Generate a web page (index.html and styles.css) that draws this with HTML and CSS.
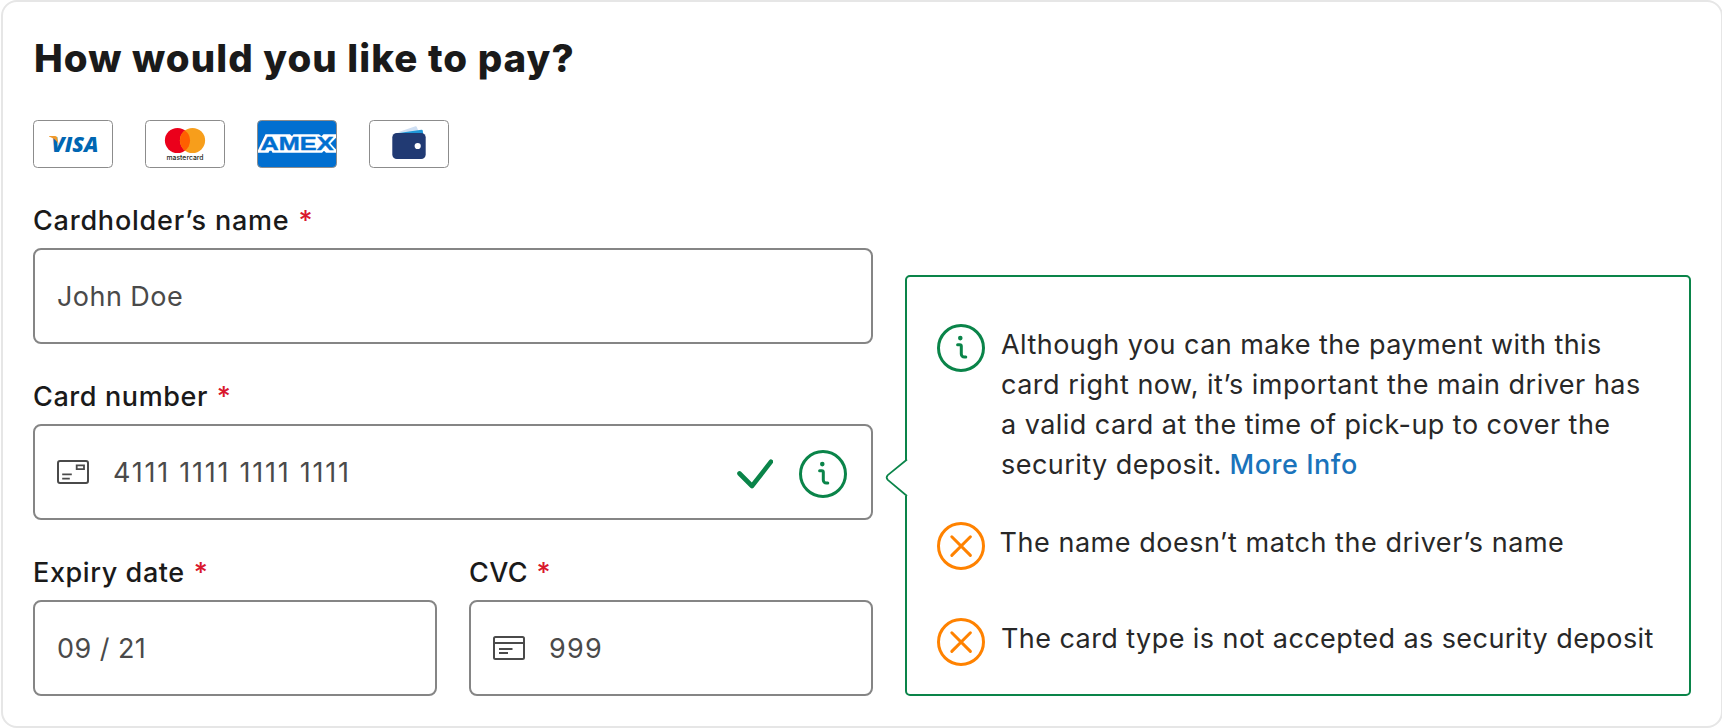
FILE: index.html
```html
<!DOCTYPE html>
<html lang="en">
<head>
<meta charset="utf-8">
<title>Payment</title>
<link rel="stylesheet" href="styles.css">
</head>
<body>
<main class="card">
  <h1 class="title">How would you like to pay?</h1>
  <div class="brands">
    <svg class="brand" viewBox="0 0 80 48" role="img" aria-label="Visa">
      <rect class="frame" x=".5" y=".5" width="79" height="47" rx="4"/>
      <text class="visa" x="18.500" y="31.500" textLength="47" lengthAdjust="spacingAndGlyphs">VISA</text>
      <path fill="#f09a2c" d="M16 16h6.200q1.600 0 2 1.600l1.400 7q-2.300-5.800-9.600-8.200z"/>
    </svg>
    <svg class="brand" viewBox="0 0 80 48" role="img" aria-label="Mastercard">
      <rect class="frame" x=".5" y=".5" width="79" height="47" rx="4"/>
      <circle cx="32.500" cy="20.500" r="12.600" fill="#eb001b"/>
      <circle cx="47.500" cy="20.500" r="12.600" fill="#f79e1b"/>
      <path fill="#ff5f00" d="M40 10.400a12.600 12.600 0 0 1 0 20.200a12.600 12.600 0 0 1 0-20.200z"/>
      <text class="mc" x="21.500" y="40" textLength="37" lengthAdjust="spacingAndGlyphs">mastercard</text>
    </svg>
    <svg class="brand" viewBox="0 0 80 48" role="img" aria-label="American Express">
      <rect x=".5" y=".5" width="79" height="47" rx="4" fill="#016fd0"/>
      <path fill="#fff" d="M1 32.800v-2.500l7.500-16.100H33l2 2 1.500-2H62l2.500 2 2-2H79v3.600L73.500 23.500l5.500 6v3.300H69l-2-2-2 2H15.500l-1-2h-2l-1 2z"/>
      <text class="amex" x="3.500" y="30" textLength="73" lengthAdjust="spacingAndGlyphs">AMEX</text>
      <rect class="frame clear" x=".5" y=".5" width="79" height="47" rx="4"/>
    </svg>
    <svg class="brand" viewBox="0 0 80 48" role="img" aria-label="Wallet">
      <rect class="frame" x=".5" y=".5" width="79" height="47" rx="4"/>
      <path fill="#cfdff3" d="M28 12.500L46.500 6.200q1-.3 1.300.7L50 12.500z"/>
      <path fill="#1f97d8" d="M28 13.200L52.500 9.700q1.100-.1 1.300 1l.5 4H28z"/>
      <rect x="23.300" y="13" width="33.400" height="26" rx="4.500" fill="#213a73"/>
      <circle cx="48.700" cy="26" r="3.100" fill="#fff"/>
    </svg>
  </div>

  <div class="layout">
    <form class="form">
      <div class="field">
        <label class="label l-name">Cardholder’s name <span class="req">*</span></label>
        <div class="input"><span class="v-text">John Doe</span></div>
      </div>
      <div class="field">
        <label class="label">Card number <span class="req">*</span></label>
        <div class="input">
          <svg class="ico" viewBox="0 0 32 24"><rect x="1" y="1" width="30" height="22" rx="2"/><path class="thin" d="M19.700 5.400h7.300v3.700h-7.300zM5.200 14.400h9.600M5.200 18.600h7.600"/></svg>
          <span class="v-number">4111 1111 1111 1111</span>
          <span class="status">
            <svg class="check" viewBox="0 0 36 30"><path d="M2.500 14.500l12.500 12.500L34 2.700"/></svg>
            <svg class="round info" viewBox="0 0 48 48"><circle cx="24" cy="24" r="22.500"/><circle class="dot" cx="23.300" cy="14.100" r="2.300"/><path d="M20.600 20.800h2.200a1.500 1.500 0 0 1 1.500 1.500v7.700a3 3 0 0 0 3 3h1.500"/></svg>
          </span>
        </div>
      </div>
      <div class="pair">
        <div class="field">
          <label class="label">Expiry date <span class="req">*</span></label>
          <div class="input"><span class="v-text">09 / 21</span></div>
        </div>
        <div class="field">
          <label class="label l-cvc">CVC <span class="req">*</span></label>
          <div class="input">
            <svg class="ico" viewBox="0 0 32 24"><rect x="1" y="1" width="30" height="22" rx="1.500"/><path d="M1 7h30M6 13h13.500M6 17h9"/></svg>
            <span class="v-cvc">999</span>
          </div>
        </div>
      </div>
    </form>

    <aside class="callout">
      <svg class="arrow" viewBox="0 0 23 40"><path class="mask" d="M20 2h3v36h-3z"/><path class="edge" d="M22 1.500L2.800 17.100q-2.300 2.300 0 4.800L22 38"/></svg>
      <div class="note note-info">
        <svg class="round info" viewBox="0 0 48 48"><circle cx="24" cy="24" r="22.500"/><circle class="dot" cx="23.300" cy="14.100" r="2.300"/><path d="M20.600 20.800h2.200a1.500 1.500 0 0 1 1.500 1.500v7.700a3 3 0 0 0 3 3h1.500"/></svg>
        <p class="msg"><span class="m1">Although you can make the payment with this</span><br><span class="m2">card right now, it’s important the main driver has</span><br><span class="m3">a valid card at the time of pick-up to cover the</span><br><span class="m4">security deposit.</span> <a class="more">More Info</a></p>
      </div>
      <div class="note note-name">
        <svg class="round error" viewBox="0 0 48 48"><circle cx="24" cy="24" r="22.500"/><path d="M14.800 14.800l18.600 18.600M33.400 14.800L14.800 33.400"/></svg>
        <p class="msg m5">The name doesn’t match the driver’s name</p>
      </div>
      <div class="note">
        <svg class="round error" viewBox="0 0 48 48"><circle cx="24" cy="24" r="22.500"/><path d="M14.800 14.800l18.600 18.600M33.400 14.800L14.800 33.400"/></svg>
        <p class="msg m6">The card type is not accepted as security deposit</p>
      </div>
    </aside>
  </div>
</main>
</body>
</html>
```

FILE: styles.css
```css
* { box-sizing: border-box; }
html { overflow: hidden; }
body {
  margin: 0;
  background: #fff;
  font-family: Inter, "Liberation Sans", sans-serif;
  font-size: 27px;
  color: #1a1a1a;
  overflow: hidden;
}
.card {
  width: 1722px;
  height: 728px;
  margin-left: 1px;
  padding: 30px;
  border: 2px solid #e6e6e6;
  border-radius: 16px;
}
.title {
  margin: 0;
  height: 56px;
  padding-left: 1px;
  font: 800 38.500px/52px Inter, sans-serif;
  letter-spacing: 1.050px;
  white-space: nowrap;
}
.brands { display: flex; gap: 32px; margin-top: 32px; }
.brand { width: 80px; height: 48px; display: block; }
.frame { fill: #fff; stroke: #8c8c8c; stroke-width: 1; }
.frame.clear { fill: none; }
.visa { font: italic 800 21px "Open Sans", sans-serif; fill: #0066b2; }
.mc { font: 500 7px Inter, sans-serif; fill: #231f20; }
.amex { font: bold 18.500px "Liberation Sans", sans-serif; fill: #016fd0; stroke: #016fd0; stroke-width: .4; }

.layout { display: flex; align-items: flex-end; gap: 32px; margin-top: 32px; }
.form { width: 840px; display: flex; flex-direction: column; gap: 32px; }
.pair { display: grid; grid-template-columns: 1fr 1fr; gap: 32px; }
.label {
  display: block;
  height: 48px;
  padding-top: 1px;
  line-height: 40px;
  font-weight: 500;
  letter-spacing: 0.6px;
  white-space: pre;
}
.l-name { letter-spacing: 0.780px; }
.l-cvc { letter-spacing: 0.4px; }
.req { color: #d9182d; margin-left: 1px; }
.input {
  display: flex;
  align-items: center;
  height: 96px;
  padding: 0 24px 0 22px;
  border: 2px solid #858585;
  border-radius: 8px;
  color: #4a4a4a;
  white-space: pre;
}
.v-text { letter-spacing: 0.450px; }
.v-number { letter-spacing: 1.750px; }
.v-cvc { letter-spacing: 1.200px; }
.ico { width: 32px; height: 24px; margin-right: 24px; fill: none; stroke: #4a4a4a; stroke-width: 2; }
.thin { stroke-width: 1.800; }
.status { margin-left: auto; padding-top: 4px; display: flex; align-items: center; gap: 26px; }
.check { width: 36px; height: 30px; fill: none; stroke: #0a8449; stroke-width: 4.600; stroke-linecap: round; stroke-linejoin: round; }
.round { width: 48px; height: 48px; flex: none; fill: none; stroke-width: 3; stroke-linecap: round; stroke-linejoin: round; }
.info { stroke: #0a8449; }
.info .dot { fill: #0a8449; stroke: none; }
.error { stroke: #ff8200; }

.callout {
  position: relative;
  width: 786px;
  height: 421px;
  padding: 47px 0 0 30px;
  border: 2px solid #0a8449;
  border-radius: 5px;
}
.arrow { position: absolute; left: -22px; top: 181px; width: 23px; height: 40px; overflow: visible; }
.mask { fill: #fff; }
.edge { fill: none; stroke: #0a8449; stroke-width: 1.700; }
.note { display: flex; align-items: flex-start; gap: 16px; height: 48px; margin-bottom: 48px; }
.note-info { height: 150px; }
.note-name { gap: 14.500px; }
.msg { margin: 1px 0 0; line-height: 40px; color: #282828; white-space: nowrap; }
.m1 { letter-spacing: 0.460px; }
.m2 { letter-spacing: 0.510px; }
.m3, .m4 { letter-spacing: 0.460px; }
.m5 { letter-spacing: 0.540px; }
.m6 { letter-spacing: 0.430px; }
.more { color: #1a73bb; font-weight: 500; letter-spacing: 0.550px; }
```
